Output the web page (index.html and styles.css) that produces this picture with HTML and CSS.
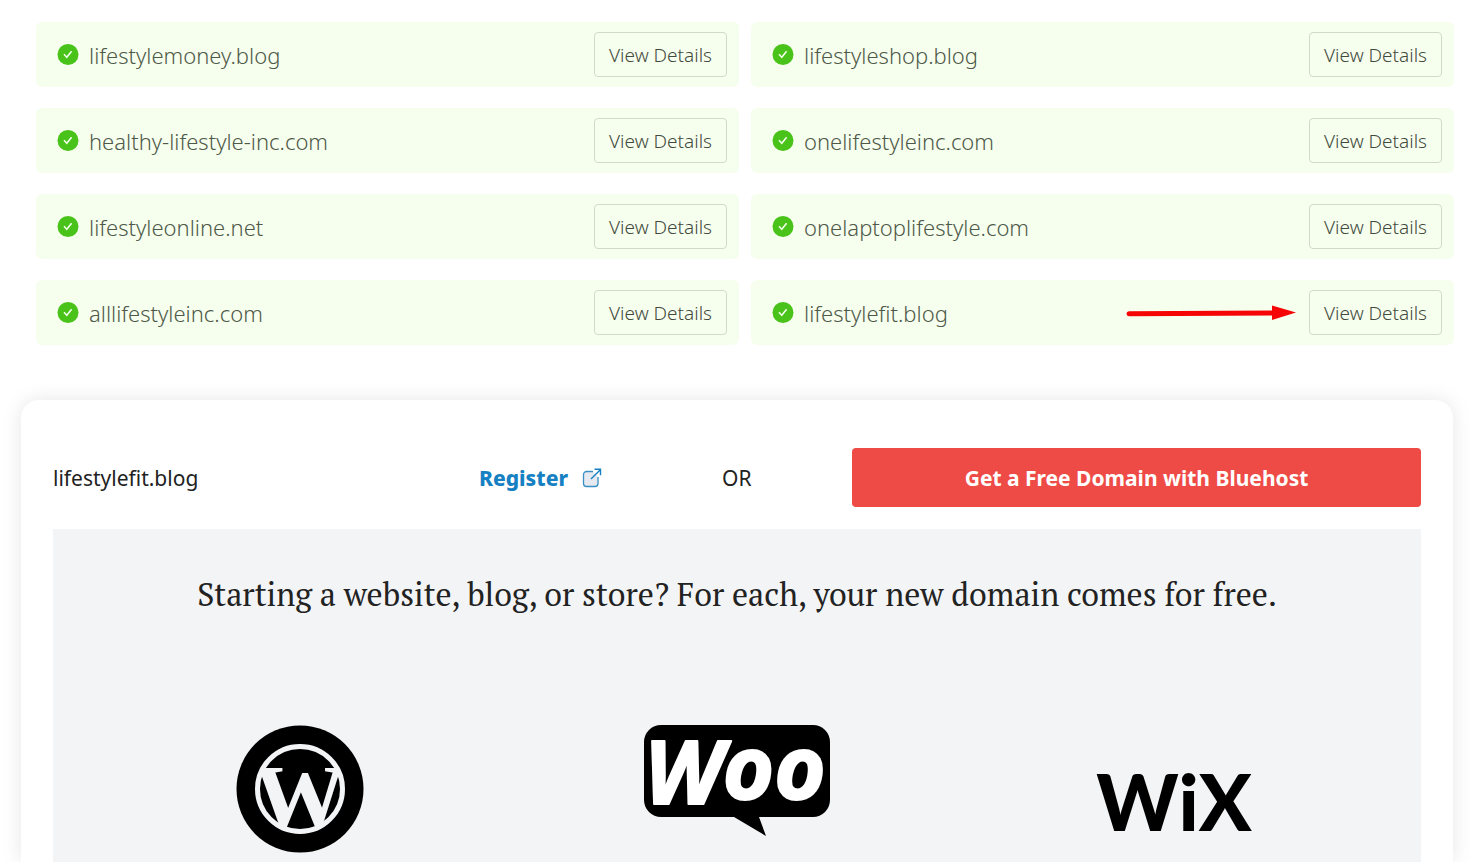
FILE: index.html
```
<!DOCTYPE html>
<html lang="en">
<head>
    <meta charset="UTF-8">
    <meta name="viewport" content="width=device-width, initial-scale=1.0">
    <title>Domain Name Generator</title>
    <link rel="stylesheet" href="styles.css">
</head>
<body>
    <svg class="sprite" aria-hidden="true">
        <symbol id="check" viewBox="0 0 22 22">
            <circle cx="11" cy="10.5" r="10.5" fill="#49c219"/>
            <path d="M7 10.2l2.8 3 4.8-6" fill="none" stroke="#f0ffe8" stroke-width="1.6"/>
        </symbol>
    </svg>
    <ul class="results">
        <li class="result">
            <svg class="check"><use href="#check"/></svg>
            <span class="name">lifestylemoney.blog</span>
            <button type="button" class="details-btn">View Details</button>
        </li>
        <li class="result">
            <svg class="check"><use href="#check"/></svg>
            <span class="name">lifestyleshop.blog</span>
            <button type="button" class="details-btn">View Details</button>
        </li>
        <li class="result">
            <svg class="check"><use href="#check"/></svg>
            <span class="name">healthy-lifestyle-inc.com</span>
            <button type="button" class="details-btn">View Details</button>
        </li>
        <li class="result">
            <svg class="check"><use href="#check"/></svg>
            <span class="name">onelifestyleinc.com</span>
            <button type="button" class="details-btn">View Details</button>
        </li>
        <li class="result">
            <svg class="check"><use href="#check"/></svg>
            <span class="name">lifestyleonline.net</span>
            <button type="button" class="details-btn">View Details</button>
        </li>
        <li class="result">
            <svg class="check"><use href="#check"/></svg>
            <span class="name">onelaptoplifestyle.com</span>
            <button type="button" class="details-btn">View Details</button>
        </li>
        <li class="result">
            <svg class="check"><use href="#check"/></svg>
            <span class="name">alllifestyleinc.com</span>
            <button type="button" class="details-btn">View Details</button>
        </li>
        <li class="result">
            <svg class="check"><use href="#check"/></svg>
            <span class="name">lifestylefit.blog</span>
            <svg class="arrow" viewBox="0 0 172 16" aria-hidden="true">
                <path d="M4 8.8L148 8" stroke="#f50505" stroke-width="5" stroke-linecap="round"/>
                <path d="M147 0.5L171 7.6L147 15z" fill="#f50505"/>
            </svg>
            <button type="button" class="details-btn">View Details</button>
        </li>
    </ul>

    <section class="card">
        <div class="card-head">
            <span class="domain">lifestylefit.blog</span>
            <a href="#" class="register">Register
                <svg class="external" viewBox="0 0 20 20" aria-hidden="true">
                    <path d="M11 3.5H4.5a3 3 0 0 0-3 3v9a3 3 0 0 0 3 3h8.5a3 3 0 0 0 3-3V9" fill="#e6eaf0" stroke="#3a8fc4" stroke-width="1.3"/>
                    <path d="M9 11L18.3 1.7M12.5 1.3h6v6" fill="none" stroke="#1580c2" stroke-width="1.4"/>
                </svg>
            </a>
            <span class="or">OR</span>
            <a href="#" class="bluehost-btn">Get a Free Domain with Bluehost</a>
        </div>
        <div class="panel">
            <h2>Starting a website, blog, or store? For each, your new domain comes for free.</h2>
            <div class="platforms">
                <svg class="wordpress" viewBox="0 0 128 128" role="img" aria-label="WordPress">
                    <clipPath id="disc"><circle cx="64" cy="64" r="42"/></clipPath>
                    <circle cx="64" cy="64" r="63.5" fill="#000"/>
                    <circle cx="64" cy="64" r="42.5" fill="none" stroke="#f3f4f6" stroke-width="5"/>
                    <text x="64" y="103" text-anchor="middle" class="wp-letter" clip-path="url(#disc)">W</text>
                </svg>
                <svg class="woo" viewBox="0 0 186 112" role="img" aria-label="Woo">
                    <path d="M17 0H169a17 17 0 0 1 17 17V75a17 17 0 0 1-17 17H115L122 111L90 92H17a17 17 0 0 1-17-17V17A17 17 0 0 1 17 0z" fill="#000"/>
                    <text x="91" y="79" text-anchor="middle" class="woo-letters">W<tspan dy="-5">oo</tspan></text>
                </svg>
                <svg class="wix" viewBox="0 0 152 62" role="img" aria-label="Wix">
                    <text x="76" y="60" text-anchor="middle" class="wix-letters">WiX</text>
                </svg>
            </div>
        </div>
    </section>
</body>
</html>
```
FILE: styles.css
```
* {
    box-sizing: border-box;
}
body {
    display: flex;
    flex-direction: column;
    min-height: 100vh;
    margin: 0;
    background-color: #fff;
    color: #222;
    font-family: "Noto Sans", "Open Sans", sans-serif;
    font-size: 21px;
    overflow-x: hidden;
}
.sprite {
    position: absolute;
    width: 0;
    height: 0;
}
.results {
    display: grid;
    grid-template-columns: 1fr 1fr;
    gap: 21px 12px;
    margin: 0;
    padding: 22px 18px 0 36px;
    list-style: none;
}
.result {
    display: flex;
    align-items: center;
    padding: 10px 12px 10px 21px;
    background-color: #f6ffed;
    border-radius: 6px;
}
.check {
    width: 22px;
    height: 22px;
    margin-right: 10px;
}
.name {
    flex: 1;
    color: #4f594a;
    font-size: 22px;
    font-weight: 300;
}
.arrow {
    width: 172px;
    height: 16px;
    margin-right: 12px;
}
.details-btn {
    height: 45px;
    padding: 0 14px;
    font-family: inherit;
    font-size: 19px;
    font-weight: 300;
    color: #42493e;
    background: transparent;
    border: 1px solid #d2d9cc;
    border-radius: 4px;
    cursor: pointer;
}
.details-btn:hover {
    border-color: #49c219;
}
.card {
    display: flex;
    flex-direction: column;
    flex: 1;
    margin: 55px 19px 0 21px;
    padding: 48px 32px 0;
    background-color: #fff;
    border-radius: 18px 18px 0 0;
    box-shadow: 0 0 20px rgba(0, 0, 0, 0.1);
}
.card-head {
    display: grid;
    grid-template-columns: 426fr 243fr 130fr 569fr;
    align-items: center;
    margin-bottom: 22px;
}
.register {
    display: flex;
    align-items: center;
    gap: 14px;
    color: #1580c2;
    font-weight: 800;
    text-decoration: none;
}
.external {
    width: 20px;
    height: 20px;
}
.bluehost-btn {
    padding: 15px 14px 13px;
    line-height: 31px;
    color: #fff;
    background-color: #ef4b46;
    border-radius: 4px;
    font-weight: 700;
    text-align: center;
    text-decoration: none;
}
.bluehost-btn:hover {
    background-color: #dc3d38;
}
.panel {
    flex: 1;
    padding: 41px 29px 8px;
    background-color: #f3f4f6;
}
.panel h2 {
    margin: 0 0 107px;
    font-family: "PT Serif", "Liberation Serif", serif;
    font-size: 32px;
    font-weight: 400;
    line-height: 48px;
    text-align: center;
}
.platforms {
    display: grid;
    grid-template-columns: repeat(3, 1fr);
    justify-items: center;
}
.wordpress {
    width: 128px;
    height: 128px;
}
.woo {
    width: 186px;
    height: 112px;
    overflow: visible;
}
.wix {
    width: 152px;
    height: 62px;
    margin-top: 46px;
    overflow: visible;
}
.wp-letter {
    font-family: "Liberation Serif", serif;
    font-size: 92px;
    font-weight: 700;
    fill: #f3f4f6;
}
.woo-letters {
    font-family: "Open Sans", sans-serif;
    font-size: 88px;
    font-weight: 700;
    font-style: italic;
    fill: #fff;
    stroke: #fff;
    stroke-width: 2px;
    stroke-linejoin: round;
}
.wix-letters {
    font-family: Lato, sans-serif;
    font-size: 78px;
    font-weight: 900;
    fill: #000;
}
```
